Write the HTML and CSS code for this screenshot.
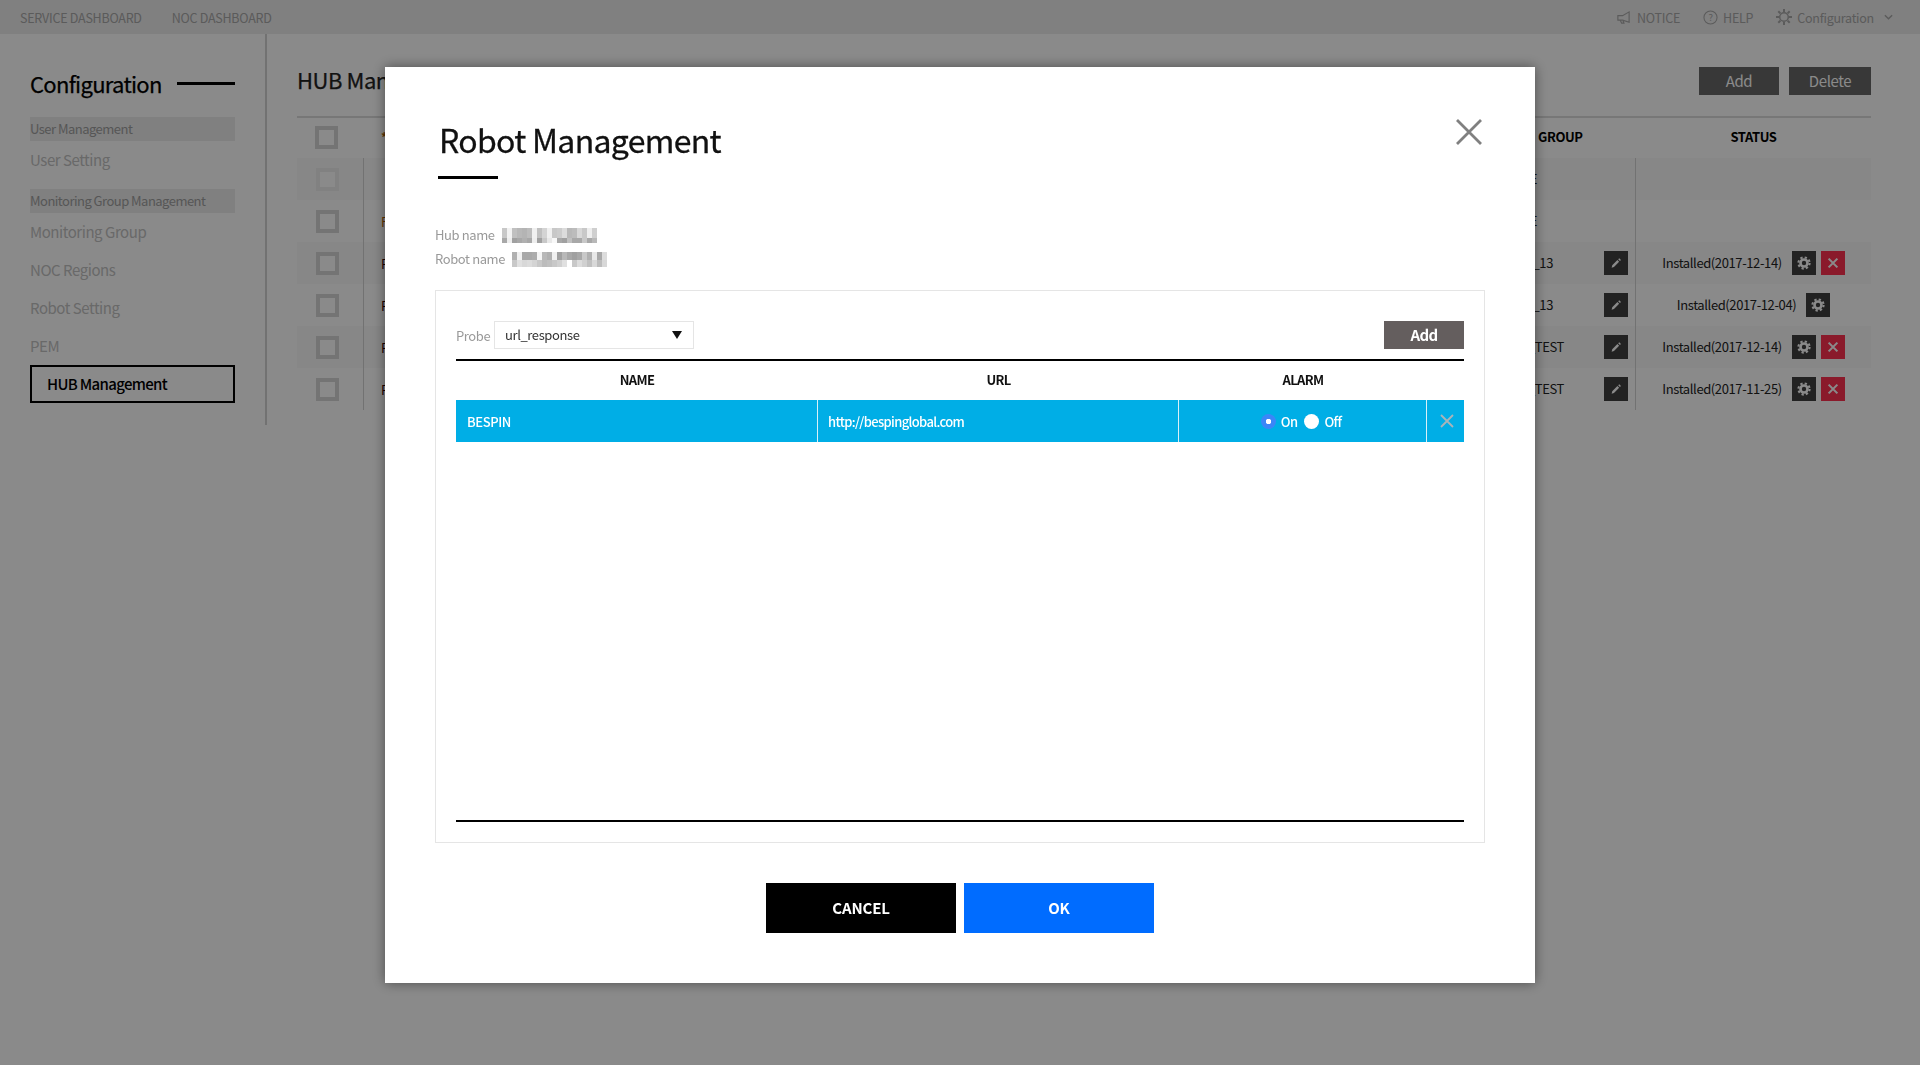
FILE: index.html
```html
<!DOCTYPE html>
<html lang="en">
<head>
    <meta charset="UTF-8">
    <meta name="viewport" content="width=device-width, initial-scale=1.0">
    <title>Robot Management</title>
    <link rel="stylesheet" href="styles.css">
</head>
<body>

<svg class="sprites" width="0" height="0">
    <symbol id="icon-gear" viewBox="0 0 16 16">
        <circle cx="8" cy="8" r="4" fill="none" stroke="currentColor" stroke-width="3"/>
        <circle cx="8" cy="8" r="6.4" fill="none" stroke="currentColor" stroke-width="2.4" stroke-dasharray="2.6 2.43"/>
    </symbol>
    <symbol id="icon-pencil" viewBox="0 0 16 16">
        <path d="M3 13.500l.7-3 5.900-5.900 2 2-5.900 5.900z M10.500 3.700l1.200-1.200 2 2-1.200 1.200z" fill="currentColor"/>
    </symbol>
    <symbol id="icon-cross" viewBox="0 0 16 16">
        <path d="M3 3l10 10M13 3L3 13" fill="none" stroke="currentColor" stroke-width="2.4"/>
    </symbol>
</svg>

<header class="topbar">
    <nav class="topbar-left">
        <a>SERVICE DASHBOARD</a>
        <a>NOC DASHBOARD</a>
    </nav>
    <nav class="topbar-right">
        <a class="notice">
            <svg class="top-icon" viewBox="0 0 16 16"><path d="M14 2v11L7 10.800H2V6h5z M4.500 11l1.500 3h2.500l-1-2.600" fill="none" stroke="currentColor" stroke-width="1.200"/></svg>
            NOTICE
        </a>
        <a class="help">
            <svg class="top-icon" viewBox="0 0 16 16"><circle cx="8" cy="8" r="7" fill="none" stroke="currentColor" stroke-width="1.100"/><text x="8" y="11.500" text-anchor="middle" class="help-mark">?</text></svg>
            HELP
        </a>
        <a class="config">
            <svg class="top-icon gear-outline" viewBox="0 0 16 16"><circle cx="8" cy="8" r="4.300" fill="none" stroke="currentColor" stroke-width="1.500"/><path d="M8 0v3M8 13v3M0 8h3M13 8h3M2.300 2.300l2.100 2.100M11.600 11.600l2.100 2.100M13.700 2.300l-2.100 2.100M4.400 11.600l-2.100 2.100" stroke="currentColor" stroke-width="2"/></svg>
            Configuration
        </a>
        <svg class="chevron" viewBox="0 0 10 6"><path d="M1 1l4 4 4-4" fill="none" stroke="currentColor" stroke-width="1.500"/></svg>
    </nav>
</header>

<div class="layout">
    <aside class="sidebar">
        <h2 class="sidebar-title">Configuration</h2>
        <div class="side-group">User Management</div>
        <a class="side-item tall">User Setting</a>
        <div class="side-group second">Monitoring Group Management</div>
        <a class="side-item">Monitoring Group</a>
        <a class="side-item">NOC Regions</a>
        <a class="side-item">Robot Setting</a>
        <a class="side-item">PEM</a>
        <a class="side-item active">HUB Management</a>
    </aside>

    <main class="content">
        <div class="content-head">
            <h2>HUB Management</h2>
            <div class="content-buttons">
                <button class="dark-btn add-btn">Add</button>
                <button class="dark-btn delete-btn">Delete</button>
            </div>
        </div>

        <div class="hub-table">
            <div class="hub-row hub-header">
                <div class="hub-check"><span class="checkbox"></span></div>
                <div class="hub-name mark">*</div>
                <div class="hub-group">GROUP</div>
                <div class="hub-status">STATUS</div>
            </div>
            <div class="hub-body">
                <div class="hub-row shade">
                    <div class="hub-check"><span class="checkbox faded"></span></div>
                    <div class="hub-name"></div>
                    <div class="hub-group"><span class="group-text">HUB_E</span></div>
                    <div class="hub-status"></div>
                </div>
                <div class="hub-row">
                    <div class="hub-check"><span class="checkbox"></span></div>
                    <div class="hub-name mark">F</div>
                    <div class="hub-group"><span class="group-text">HUB_E</span></div>
                    <div class="hub-status"></div>
                </div>
                <div class="hub-row shade">
                    <div class="hub-check"><span class="checkbox"></span></div>
                    <div class="hub-name">P</div>
                    <div class="hub-group"><span class="group-text num">HUB_13</span><button class="icon-btn"><svg><use href="#icon-pencil"/></svg></button></div>
                    <div class="hub-status"><span>Installed(2017-12-14)</span><button class="icon-btn"><svg><use href="#icon-gear"/></svg></button><button class="icon-btn red"><svg><use href="#icon-cross"/></svg></button></div>
                </div>
                <div class="hub-row">
                    <div class="hub-check"><span class="checkbox"></span></div>
                    <div class="hub-name">P</div>
                    <div class="hub-group"><span class="group-text num">HUB_13</span><button class="icon-btn"><svg><use href="#icon-pencil"/></svg></button></div>
                    <div class="hub-status"><span>Installed(2017-12-04)</span><button class="icon-btn"><svg><use href="#icon-gear"/></svg></button></div>
                </div>
                <div class="hub-row shade">
                    <div class="hub-check"><span class="checkbox"></span></div>
                    <div class="hub-name">P</div>
                    <div class="hub-group"><span class="group-text test">HUB_TEST</span><button class="icon-btn"><svg><use href="#icon-pencil"/></svg></button></div>
                    <div class="hub-status"><span>Installed(2017-12-14)</span><button class="icon-btn"><svg><use href="#icon-gear"/></svg></button><button class="icon-btn red"><svg><use href="#icon-cross"/></svg></button></div>
                </div>
                <div class="hub-row">
                    <div class="hub-check"><span class="checkbox"></span></div>
                    <div class="hub-name">P</div>
                    <div class="hub-group"><span class="group-text test">HUB_TEST</span><button class="icon-btn"><svg><use href="#icon-pencil"/></svg></button></div>
                    <div class="hub-status"><span>Installed(2017-11-25)</span><button class="icon-btn"><svg><use href="#icon-gear"/></svg></button><button class="icon-btn red"><svg><use href="#icon-cross"/></svg></button></div>
                </div>
            </div>
        </div>
    </main>
</div>

<div class="dim">
    <div class="modal">
        <svg class="modal-close" viewBox="0 0 26 26"><path d="M1 1l24 24M25 1L1 25" fill="none" stroke="#808080" stroke-width="2.800"/></svg>

        <h1 class="modal-title">Robot Management</h1>
        <div class="title-line"></div>

        <div class="info-row">
            <span>Hub name</span>
            <svg class="mosaic" viewBox="0 0 100 15" preserveAspectRatio="none">
                <g>
                    <rect x="5" width="5" height="10" fill="#c8c8c8"/><rect x="10" width="5" height="10" fill="#f2f2f2"/><rect x="15" width="5" height="10" fill="#c0c0c0"/><rect x="20" width="5" height="10" fill="#b8b8b8"/><rect x="25" width="5" height="10" fill="#b4b4b4"/><rect x="30" width="5" height="10" fill="#bcbcbc"/><rect x="35" width="5" height="10" fill="#f0f0f0"/><rect x="40" width="5" height="10" fill="#c0c0c0"/><rect x="45" width="5" height="10" fill="#d4d4d4"/><rect x="50" width="5" height="10" fill="#f0f0f0"/><rect x="55" width="5" height="10" fill="#c8c8c8"/><rect x="60" width="5" height="10" fill="#cccccc"/><rect x="65" width="5" height="10" fill="#dcdcdc"/><rect x="70" width="5" height="10" fill="#b8b8b8"/><rect x="75" width="5" height="10" fill="#bcbcbc"/><rect x="80" width="5" height="10" fill="#d8d8d8"/><rect x="85" width="5" height="10" fill="#c8c8c8"/><rect x="90" width="5" height="10" fill="#eeeeee"/><rect x="95" width="5" height="10" fill="#cfcfcf"/>
                    <rect x="5" y="10" width="5" height="5" fill="#a8a8a8"/><rect x="10" y="10" width="5" height="5" fill="#eeeeee"/><rect x="15" y="10" width="5" height="5" fill="#a0a0a0"/><rect x="20" y="10" width="5" height="5" fill="#a8a8a8"/><rect x="25" y="10" width="5" height="5" fill="#b0b0b0"/><rect x="30" y="10" width="5" height="5" fill="#a8a8a8"/><rect x="35" y="10" width="5" height="5" fill="#eeeeee"/><rect x="40" y="10" width="5" height="5" fill="#a0a0a0"/><rect x="45" y="10" width="5" height="5" fill="#c8c8c8"/><rect x="50" y="10" width="5" height="5" fill="#e8e8e8"/><rect x="55" y="10" width="5" height="5" fill="#f8f8f8"/><rect x="60" y="10" width="5" height="5" fill="#a8a8a8"/><rect x="65" y="10" width="5" height="5" fill="#a0a0a0"/><rect x="70" y="10" width="5" height="5" fill="#c0c0c0"/><rect x="75" y="10" width="5" height="5" fill="#a8a8a8"/><rect x="80" y="10" width="5" height="5" fill="#a8a8a8"/><rect x="85" y="10" width="5" height="5" fill="#c8c8c8"/><rect x="90" y="10" width="5" height="5" fill="#a8a8a8"/><rect x="95" y="10" width="5" height="5" fill="#b8b8b8"/>
                </g>
            </svg>
        </div>
        <div class="info-row">
            <span>Robot name</span>
            <svg class="mosaic" viewBox="0 0 100 15" preserveAspectRatio="none">
                <g>
                    <rect x="5" width="5" height="8" fill="#b0b0b0"/><rect x="10" width="5" height="8" fill="#f0f0f0"/><rect x="15" width="5" height="8" fill="#a8a8a8"/><rect x="20" width="5" height="8" fill="#a8a8a8"/><rect x="25" width="5" height="8" fill="#acacac"/><rect x="30" width="5" height="8" fill="#f4f4f4"/><rect x="35" width="5" height="8" fill="#b8b8b8"/><rect x="40" width="5" height="8" fill="#b0b0b0"/><rect x="45" width="5" height="8" fill="#f0f0f0"/><rect x="50" width="5" height="8" fill="#a0a0a0"/><rect x="55" width="5" height="8" fill="#b8b8b8"/><rect x="60" width="5" height="8" fill="#a8a8a8"/><rect x="65" width="5" height="8" fill="#a0a0a0"/><rect x="70" width="5" height="8" fill="#a8a8a8"/><rect x="75" width="5" height="8" fill="#c8c8c8"/><rect x="80" width="5" height="8" fill="#b0b0b0"/><rect x="85" width="5" height="8" fill="#e8e8e8"/><rect x="90" width="5" height="8" fill="#a8a8a8"/><rect x="95" width="5" height="8" fill="#dcdcdc"/>
                    <rect x="5" y="8" width="5" height="7" fill="#c8c8c8"/><rect x="10" y="8" width="5" height="7" fill="#e0e0e0"/><rect x="15" y="8" width="5" height="7" fill="#d8d8d8"/><rect x="20" y="8" width="5" height="7" fill="#dcdcdc"/><rect x="25" y="8" width="5" height="7" fill="#d4d4d4"/><rect x="30" y="8" width="5" height="7" fill="#c8c8c8"/><rect x="35" y="8" width="5" height="7" fill="#bcbcbc"/><rect x="40" y="8" width="5" height="7" fill="#c0c0c0"/><rect x="45" y="8" width="5" height="7" fill="#c8c8c8"/><rect x="50" y="8" width="5" height="7" fill="#d0d0d0"/><rect x="55" y="8" width="5" height="7" fill="#e0e0e0"/><rect x="65" y="8" width="5" height="7" fill="#c8c8c8"/><rect x="70" y="8" width="5" height="7" fill="#dcdcdc"/><rect x="75" y="8" width="5" height="7" fill="#d0d0d0"/><rect x="80" y="8" width="5" height="7" fill="#c0c0c0"/><rect x="85" y="8" width="5" height="7" fill="#d8d8d8"/><rect x="90" y="8" width="5" height="7" fill="#bcbcbc"/><rect x="95" y="8" width="5" height="7" fill="#d8d8d8"/>
                </g>
            </svg>
        </div>

        <section class="panel">
            <div class="panel-toolbar">
                <label class="probe-label">Probe</label>
                <div class="probe-select">
                    <span>url_response</span>
                    <i class="select-arrow"></i>
                </div>
                <button class="panel-add">Add</button>
            </div>

            <div class="probe-table">
                <div class="probe-row probe-head">
                    <div>NAME</div>
                    <div>URL</div>
                    <div>ALARM</div>
                    <div></div>
                </div>
                <div class="probe-row probe-selected">
                    <div class="cell-text cell-name">BESPIN</div>
                    <div class="cell-text cell-url">http://bespinglobal.com</div>
                    <div class="cell-alarm">
                        <span class="radio on"></span><span>On</span>
                        <span class="radio off"></span><span>Off</span>
                    </div>
                    <div class="cell-remove">
                        <svg viewBox="0 0 14 14"><path d="M1 1l12 12M13 1L1 13" fill="none" stroke="#a9b4b9" stroke-width="1.800"/></svg>
                    </div>
                </div>
            </div>
        </section>

        <div class="modal-actions">
            <button class="action-btn cancel">CANCEL</button>
            <button class="action-btn ok">OK</button>
        </div>
    </div>
</div>

</body>
</html>
```

FILE: styles.css
```css
* {
    box-sizing: border-box;
}
html, body {
    margin: 0;
    height: 100%;
}
body {
    background-color: #fff;
    color: #222;
    font-family: "Noto Sans CJK KR", "Noto Sans", sans-serif;
    font-size: 13px;
    letter-spacing: -0.03em;
    overflow: hidden;
}
h1, h2 {
    margin: 0;
    font-weight: 400;
}
button {
    border: 0;
    padding: 0;
    font-family: inherit;
    letter-spacing: inherit;
    cursor: pointer;
}
.sprites {
    position: absolute;
}

/* top bar */
.topbar {
    height: 34px;
    background-color: #ececec;
    display: flex;
    justify-content: space-between;
    align-items: center;
    padding: 0 27px 0 20px;
    color: #a8a8a8;
    font-size: 12.500px;
    letter-spacing: -0.02em;
}
.topbar-left {
    display: flex;
    gap: 30px;
}
.topbar-right {
    display: flex;
    align-items: center;
}
.topbar-right a {
    display: flex;
    align-items: center;
    gap: 5px;
}
.topbar-right .notice {
    gap: 6px;
    margin-right: 23px;
}
.help {
    margin-right: 23px;
}
.top-icon {
    width: 15px;
    height: 15px;
}
.gear-outline {
    width: 16px;
    height: 16px;
}
.help-mark {
    fill: currentColor;
    font-size: 10px;
}
.chevron {
    width: 9px;
    height: 6px;
    margin-left: 10px;
}

/* sidebar and hub list under the dim layer */
.layout {
    display: flex;
    height: 391px;
}
.sidebar {
    width: 267px;
    padding: 32px 30px 0 30px;
    border-right: 2px solid #d2d2d2;
    color: #c2c2c2;
    font-size: 15px;
    letter-spacing: -0.03em;
}
.sidebar-title {
    display: flex;
    align-items: center;
    gap: 15px;
    height: 34px;
    color: #000;
    font-size: 22px;
    letter-spacing: -0.032em;
    -webkit-text-stroke: 0.25px #000;
}
.sidebar-title::after {
    content: "";
    flex: 1;
    height: 3px;
    background-color: #000;
}
.side-group {
    height: 24px;
    line-height: 23px;
    margin-top: 17px;
    background-color: #ececec;
    color: #a0a0a0;
    font-size: 13px;
    letter-spacing: -0.04em;
}
.side-group.second {
    margin-top: 8px;
}
.side-item {
    display: block;
    height: 38px;
    line-height: 38px;
}
.side-item.tall {
    height: 40px;
    line-height: 38px;
}
.side-item.active {
    border: 2px solid #000;
    color: #000;
    font-weight: 500;
    line-height: 33px;
    padding-left: 15px;
    letter-spacing: -0.045em;
}

.content {
    flex: 1;
    padding: 33px 49px 0 30px;
}
.content-head {
    display: flex;
    justify-content: space-between;
    align-items: flex-start;
    height: 51px;
    border-bottom: 2px solid #dcdcdc;
}
.content-head h2 {
    font-size: 22px;
    line-height: 24px;
    letter-spacing: -0.02em;
    -webkit-text-stroke: 0.25px #222;
}
.content-buttons {
    display: flex;
    gap: 10px;
}
.dark-btn {
    height: 28px;
    padding-bottom: 2px;
    background-color: #686868;
    color: #fff;
    font-size: 15px;
}
.add-btn {
    width: 80px;
}
.delete-btn {
    width: 82px;
}
.hub-row {
    display: grid;
    grid-template-columns: 67px 1fr 286px 235px;
    height: 42px;
    align-items: center;
}
.hub-header {
    height: 40px;
    padding-bottom: 3px;
    color: #000;
    font-weight: 700;
}
.hub-body .hub-row > div {
    height: 100%;
}
.shade {
    background-color: #f9f9f9;
}
.hub-check {
    display: flex;
    align-items: center;
    padding-left: 19px;
}
.hub-header .hub-check {
    padding-left: 18px;
    margin-top: 1px;
}
.hub-body .hub-check {
    border-right: 1px solid #d2d2d2;
}
.checkbox {
    width: 23px;
    height: 23px;
    border: 4px solid #d6d6d6;
    background-color: #fff;
}
.checkbox.faded {
    border-color: #efefef;
}
.hub-name {
    display: flex;
    align-items: center;
    padding-left: 17px;
    color: #330000;
}
.hub-name.mark {
    color: #b06000;
}
.hub-group {
    display: flex;
    align-items: center;
    justify-content: space-between;
    padding-right: 7px;
}
.hub-body .hub-group {
    border-right: 1px solid #d2d2d2;
}
.hub-header .hub-group {
    padding-left: 188px;
}
.group-text {
    width: 187px;
    margin-top: -1px;
    text-align: right;
}
.group-text.num {
    width: 203px;
}
.group-text.test {
    width: 214px;
}
.hub-status {
    display: flex;
    align-items: center;
    justify-content: center;
}
.hub-status span {
    margin-top: -1px;
}
.hub-status .icon-btn {
    margin-left: 5px;
}
.hub-status span + .icon-btn {
    margin-left: 10px;
}
.icon-btn {
    width: 24px;
    height: 24px;
    background-color: #3f3f3f;
    color: #fff;
    display: flex;
    justify-content: center;
    align-items: center;
}
.icon-btn svg {
    width: 14px;
    height: 14px;
}
.icon-btn.red {
    background-color: #ff3050;
}

/* dim layer and modal */
.dim {
    position: fixed;
    inset: 0;
    background-color: rgba(0, 0, 0, 0.46);
    display: flex;
    justify-content: center;
    align-items: flex-start;
    padding-top: 67px;
}
.modal {
    position: relative;
    width: 1150px;
    height: 916px;
    padding: 48px 50px 0;
    background-color: #fff;
    box-shadow: 0 0 12px rgba(0, 0, 0, 0.45);
}
.modal-close {
    position: absolute;
    top: 52px;
    right: 53px;
    width: 26px;
    height: 26px;
}
.modal-title {
    margin-left: 4px;
    color: #111;
    font-size: 32px;
    line-height: 48px;
    letter-spacing: -0.0215em;
    -webkit-text-stroke: 0.3px #111;
}
.title-line {
    width: 60px;
    height: 3px;
    margin: 13px 0 44px 3px;
    background-color: #000;
}
.info-row {
    display: flex;
    align-items: center;
    gap: 2px;
    height: 24px;
    color: #999;
    font-size: 13px;
}
.info-row span {
    margin-top: -2px;
}
.mosaic {
    width: 100px;
    height: 15px;
    filter: blur(0.5px);
}
.panel {
    height: 553px;
    margin-top: 19px;
    padding: 30px 20px 20px;
    border: 1px solid #e5e5e5;
}
.panel-toolbar {
    display: flex;
    align-items: center;
    height: 28px;
    margin-bottom: 10px;
}
.probe-label {
    width: 38px;
    color: #999;
    font-size: 13px;
}
.probe-select {
    width: 200px;
    height: 28px;
    padding: 0 11px 0 10px;
    border: 1px solid #e5e5e5;
    display: flex;
    justify-content: space-between;
    align-items: center;
    color: #333;
    font-size: 13px;
}
.probe-select span {
    margin-top: -1px;
}
.select-arrow {
    width: 0;
    height: 0;
    border-left: 5px solid transparent;
    border-right: 5px solid transparent;
    border-top: 8px solid #111;
}
.panel-add {
    width: 80px;
    height: 28px;
    padding-bottom: 1px;
    margin-left: auto;
    background-color: #645e5e;
    color: #fff;
    font-size: 15px;
    font-weight: 700;
    letter-spacing: -0.04em;
}
.probe-table {
    height: 463px;
    border-top: 2px solid #000;
    border-bottom: 2px solid #000;
}
.probe-row {
    display: grid;
    grid-template-columns: 362px 361px 248px 37px;
    align-items: center;
}
.probe-head {
    height: 39px;
    padding-bottom: 3px;
    color: #111;
    font-size: 13px;
    font-weight: 700;
    letter-spacing: -0.05em;
    text-align: center;
}
.probe-selected {
    height: 42px;
    background-color: #00aee6;
    color: #fff;
    font-size: 13px;
    font-weight: 500;
}
.probe-selected > div {
    height: 100%;
    display: flex;
    align-items: center;
}
.cell-text {
    padding-left: 10px;
    border-right: 1px solid #d8f0f8;
}
.cell-name {
    padding-left: 11px;
}
.cell-url {
    letter-spacing: -0.05em;
}
.cell-alarm {
    justify-content: center;
    padding-right: 3px;
    border-right: 1px solid #d8f0f8;
    letter-spacing: -0.05em;
}
.cell-remove {
    justify-content: center;
    padding-left: 2px;
}
.cell-remove svg {
    width: 14px;
    height: 14px;
}
.radio {
    width: 15px;
    height: 15px;
    border-radius: 50%;
    margin-right: 5px;
}
.radio.on {
    background: radial-gradient(circle, #fff 0 2.500px, #3b86f7 3px);
}
.radio.off {
    margin-left: 7px;
    background-color: #fff;
}
.modal-actions {
    display: flex;
    justify-content: center;
    gap: 8px;
    margin-top: 40px;
}
.action-btn {
    width: 190px;
    height: 50px;
    padding-bottom: 2px;
    color: #fff;
    font-size: 15px;
    font-weight: 700;
    letter-spacing: -0.01em;
}
.cancel {
    background-color: #000;
}
.ok {
    background-color: #006cff;
}
```
